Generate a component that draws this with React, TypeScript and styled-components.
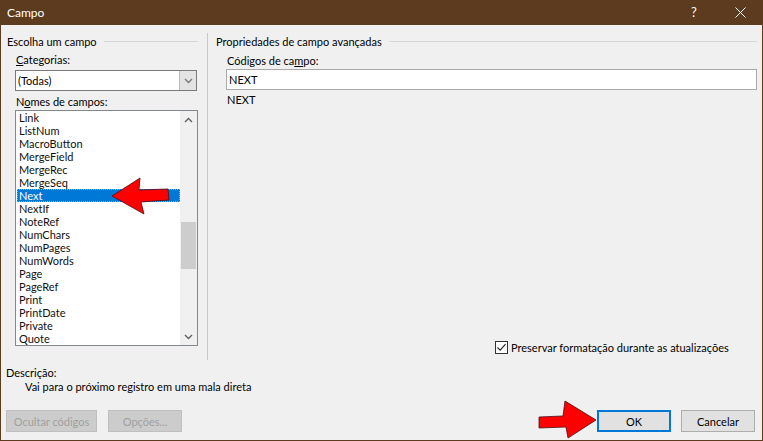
import React from 'react'
import styled, { createGlobalStyle } from 'styled-components'

const GlobalStyle = createGlobalStyle`
  html, body {
    margin: 0;
    padding: 0;
    overflow: hidden;
    background: #f0f0f0;
  }
`

const FONT = `Lato, "Liberation Sans", Arial, sans-serif`

const Window = styled.div`
  position: relative;
  box-sizing: border-box;
  width: 763px;
  height: 441px;
  border: 1px solid #5c3b1e;
  border-top: none;
  background: #f0f0f0;
  display: flex;
  flex-direction: column;
  font-family: ${FONT};
  font-size: 11px;
  line-height: 15px;
  color: #000;
`

const TitleBar = styled.div`
  height: 25px;
  margin: 0 -1px;
  background: #5c3b1e;
  display: flex;
  align-items: center;
  padding-left: 7px;
  color: #fff;
`

const Title = styled.div`
  flex: 1;
  font-size: 12px;
`

const CaptionButton = styled.div`
  width: 46px;
  height: 25px;
  display: flex;
  align-items: center;
  justify-content: center;
  color: #fff;
  font-size: 13px;
`

const Main = styled.div`
  display: flex;
  margin-top: 8px;
  height: 327px;
`

const LeftPanel = styled.div`
  box-sizing: border-box;
  width: 207px;
  padding: 1px 0 0 6px;
  border-right: 1px solid #c9c9c9;
  display: flex;
  flex-direction: column;
`

const RightPanel = styled.div`
  flex: 1;
  padding: 1px 5px 0 8px;
  display: flex;
  flex-direction: column;
`

const GroupHeader = styled.div<{ $trail: number }>`
  display: flex;
  align-items: center;
  height: 15px;
  padding-right: ${(p) => p.$trail}px;
`

const GroupLine = styled.div`
  flex: 1;
  height: 1px;
  margin-left: 7px;
  background: #d7d7d7;
`

const Field = styled.div<{ $indent: number; $top: number }>`
  margin-left: ${(p) => p.$indent}px;
  margin-top: ${(p) => p.$top}px;
`

const Label = styled.div<{ $pad?: number }>`
  padding-left: ${(p) => p.$pad ?? 1}px;
`

const ComboBox = styled.div`
  box-sizing: border-box;
  width: 182px;
  height: 21px;
  margin-top: 3px;
  border: 1px solid #7a7a7a;
  background: #fff;
  display: flex;
`

const ComboValue = styled.div`
  flex: 1;
  padding-left: 2px;
  line-height: 19px;
`

const ComboButton = styled.div`
  width: 16px;
  background: #e3e3e3;
  border-left: 1px solid #b9b9b9;
  display: flex;
  align-items: center;
  justify-content: center;
`

const ListBox = styled.div`
  box-sizing: border-box;
  width: 183px;
  height: 236px;
  margin-top: 1px;
  border: 1px solid #828790;
  background: #fff;
  display: flex;
`

const ListItems = styled.div`
  flex: 1;
  padding: 0 0 0 1px;
  overflow: hidden;
`

const ListItem = styled.div<{ $selected?: boolean }>`
  height: 13px;
  line-height: 13px;
  padding-left: 2px;
  color: ${(p) => (p.$selected ? '#fff' : '#111')};
  background: ${(p) => (p.$selected ? '#0078d7' : 'transparent')};
  outline: ${(p) => (p.$selected ? '1px dotted #ff9a3c' : 'none')};
  outline-offset: -1px;
  white-space: nowrap;
`

const ScrollBar = styled.div`
  width: 17px;
  background: #f0f0f0;
  display: flex;
  flex-direction: column;
`

const ScrollArrow = styled.div`
  height: 17px;
  display: flex;
  align-items: center;
  justify-content: center;
`

const ScrollTrack = styled.div`
  flex: 1;
  padding: 0 1px;
`

const ScrollThumb = styled.div`
  height: 47px;
  background: #cdcdcd;
`

const TextInput = styled.div`
  box-sizing: border-box;
  height: 21px;
  margin-top: 1px;
  margin-left: -1px;
  border: 1px solid #a9a9a9;
  background: #fff;
  padding-left: 2px;
  line-height: 19px;
`

const CheckRow = styled.label`
  margin-top: auto;
  margin-bottom: 5px;
  margin-left: 279px;
  display: flex;
  align-items: center;
  gap: 3px;
`

const CheckBox = styled.span`
  box-sizing: border-box;
  width: 13px;
  height: 13px;
  border: 1px solid #333;
  background: #fff;
  display: flex;
  align-items: center;
  justify-content: center;
`

const Description = styled.div`
  margin-top: 5px;
  padding-left: 5px;
`

const DescriptionText = styled.div`
  margin-top: -1px;
  padding-left: 19px;
`

const Footer = styled.div`
  margin-top: auto;
  padding: 0 7px 8px 5px;
  display: flex;
  gap: 10px;
`

const Button = styled.div<{ $width: number; $disabled?: boolean; $default?: boolean }>`
  box-sizing: border-box;
  width: ${(p) => p.$width}px;
  height: 22px;
  display: flex;
  align-items: center;
  justify-content: center;
  background: ${(p) => (p.$disabled ? '#cccccc' : '#e1e1e1')};
  color: ${(p) => (p.$disabled ? '#a0a0a0' : '#000')};
  border: ${(p) => (p.$default ? '2px solid #0078d7' : p.$disabled ? '1px solid #bfbfbf' : '1px solid #adadad')};
`

const Spacer = styled.div`
  flex: 1;
`

const Annotation = styled.svg`
  position: absolute;
  pointer-events: none;
`

const Chevron = ({ dir, color = '#606060' }: { dir: 'up' | 'down'; color?: string }) => (
  <svg width="9" height="6" viewBox="0 0 9 6">
    <path
      d={dir === 'up' ? 'M1 5 L4.5 1.5 L8 5' : 'M1 1 L4.5 4.5 L8 1'}
      fill="none"
      stroke={color}
      strokeWidth="1.4"
    />
  </svg>
)

const fields = [
  'Link',
  'ListNum',
  'MacroButton',
  'MergeField',
  'MergeRec',
  'MergeSeq',
  'Next',
  'NextIf',
  'NoteRef',
  'NumChars',
  'NumPages',
  'NumWords',
  'Page',
  'PageRef',
  'Print',
  'PrintDate',
  'Private',
  'Quote',
]

export default function App() {
  const selected = 'Next'
  const thumbOffset = 94

  return (
    <>
      <GlobalStyle />
      <Window>
        <TitleBar>
          <Title>Campo</Title>
          <CaptionButton>?</CaptionButton>
          <CaptionButton>
            <svg width="11" height="11" viewBox="0 0 11 11">
              <path d="M0.5 0.5 L10.5 10.5 M10.5 0.5 L0.5 10.5" stroke="#fff" strokeWidth="1" />
            </svg>
          </CaptionButton>
        </TitleBar>

        <Main>
          <LeftPanel>
            <GroupHeader $trail={9}>
              <span>Escolha um campo</span>
              <GroupLine />
            </GroupHeader>
            <Field $indent={8} $top={3}>
              <Label>
                <u>C</u>ategorias:
              </Label>
              <ComboBox>
                <ComboValue>(Todas)</ComboValue>
                <ComboButton>
                  <Chevron dir="down" color="#7a7a7a" />
                </ComboButton>
              </ComboBox>
            </Field>
            <Field $indent={8} $top={3}>
              <Label>
                N<u>o</u>mes de campos:
              </Label>
              <ListBox>
                <ListItems>
                  {fields.map((f) => (
                    <ListItem key={f} $selected={f === selected}>
                      {f}
                    </ListItem>
                  ))}
                </ListItems>
                <ScrollBar>
                  <ScrollArrow>
                    <Chevron dir="up" />
                  </ScrollArrow>
                  <ScrollTrack>
                    <ScrollThumb style={{ marginTop: thumbOffset }} />
                  </ScrollTrack>
                  <ScrollArrow>
                    <Chevron dir="down" />
                  </ScrollArrow>
                </ScrollBar>
              </ListBox>
            </Field>
          </LeftPanel>

          <RightPanel>
            <GroupHeader $trail={0}>
              <span>Propriedades de campo avançadas</span>
              <GroupLine />
            </GroupHeader>
            <Field $indent={11} $top={4}>
              <Label $pad={0}>
                Códigos de ca<u>m</u>po:
              </Label>
              <TextInput>NEXT</TextInput>
            </Field>
            <Field $indent={11} $top={2}>
              NEXT
            </Field>
            <CheckRow>
              <CheckBox>
                <svg width="11" height="11" viewBox="0 0 11 11">
                  <path d="M1.5 5.5 L4.2 8.2 L9.5 2.2" fill="none" stroke="#222" strokeWidth="1.1" />
                </svg>
              </CheckBox>
              <span>Preservar formatação durante as atualizações</span>
            </CheckRow>
          </RightPanel>
        </Main>

        <Description>
          <div>Descrição:</div>
          <DescriptionText>Vai para o próximo registro em uma mala direta</DescriptionText>
        </Description>

        <Footer>
          <Button $width={91} $disabled>
            Ocultar códigos
          </Button>
          <Button $width={74} $disabled style={{ marginLeft: 1 }}>
            Opções...
          </Button>
          <Spacer />
          <Button $width={74} $default>
            OK
          </Button>
          <Button $width={74}>Cancelar</Button>
        </Footer>

        <Annotation width="70" height="45" viewBox="0 0 70 45" style={{ left: 104, top: 175 }}>
          <polygon
            points="7,21 35,3 34,15 63,14 64,25 36,27 39,39"
            fill="#ff0000"
            stroke="#4a1010"
            strokeWidth="0.8"
            strokeLinejoin="round"
          />
        </Annotation>
        <Annotation width="65" height="43" viewBox="0 0 65 43" style={{ left: 534, top: 398 }}>
          <polygon
            points="4,19 28,18 30,3 61,22 33,40 31,29 4,30"
            fill="#ff0000"
            stroke="#4a1010"
            strokeWidth="0.8"
            strokeLinejoin="round"
          />
        </Annotation>
      </Window>
    </>
  )
}
